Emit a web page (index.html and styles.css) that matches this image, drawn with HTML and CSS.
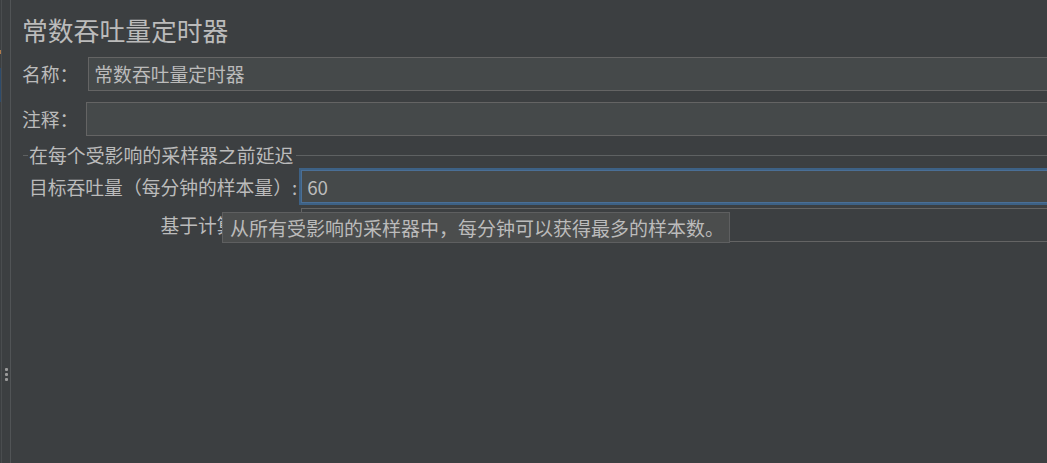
FILE: index.html
```html
<!DOCTYPE html>
<html lang="zh-CN">
<head>
<meta charset="utf-8">
<title>常数吞吐量定时器</title>
<link rel="stylesheet" href="styles.css">
</head>
<body>
<div class="app">
  <div class="gutter">
    <div class="gutter-line"></div>
    <div class="gutter-marks">
      <span class="mark-orange"></span>
      <span class="mark-blue"></span>
      <span class="grip"><i></i><i></i><i></i></span>
    </div>
  </div>
  <div class="divider"></div>
  <main class="panel">
    <h1 class="title">常数吞吐量定时器</h1>
    <div class="row row-name">
      <span class="label">名称：</span>
      <div class="field">常数吞吐量定时器</div>
    </div>
    <div class="row row-comment">
      <span class="label">注释：</span>
      <div class="field"></div>
    </div>
    <section class="group">
      <div class="group-head">
        <span class="group-line-short"></span>
        <span class="legend">在每个受影响的采样器之前延迟</span>
        <span class="group-line"></span>
      </div>
      <div class="grid">
        <span class="label glabel">目标吞吐量（每分钟的样本量）:</span>
        <div class="field focused">60</div>
        <span class="label glabel">基于计算吞吐量:</span>
        <div class="combo"></div>
      </div>
    </section>
  </main>
  <div class="tooltip">从所有受影响的采样器中，每分钟可以获得最多的样本数。</div>
</div>
</body>
</html>
```
FILE: styles.css
```css
html, body {
  margin: 0;
  padding: 0;
  background: #3c3f41;
  overflow: hidden;
}
body {
  width: 1047px;
  height: 463px;
  font-family: "Noto Sans CJK SC", "Noto Sans", sans-serif;
  color: #bbbbbb;
}
.app {
  position: relative;
  display: flex;
  height: 463px;
  overflow: hidden;
}
.gutter {
  position: relative;
  width: 10px;
  flex: none;
  display: flex;
}
.gutter-line {
  width: 1px;
  margin-left: 1px;
  background: #4a4d4f;
}
.gutter-marks {
  flex: 1;
  display: flex;
  flex-direction: column;
}
.mark-orange {
  position: absolute;
  left: 0;
  top: 50px;
  width: 1px;
  height: 4px;
  background: #b07a4a;
}
.mark-blue {
  position: absolute;
  left: 0;
  top: 68px;
  width: 1px;
  height: 34px;
  background: #2d4b6b;
}
.grip {
  position: absolute;
  left: 5px;
  top: 368px;
  display: flex;
  flex-direction: column;
  gap: 2px;
}
.grip i {
  display: block;
  width: 3px;
  height: 3px;
  background: #9a9a9a;
  border-radius: 1px;
}
.divider {
  width: 1px;
  flex: none;
  background: #515456;
}
.panel {
  flex: 1;
  padding-left: 11px;
  min-width: 0;
}
.title {
  margin: 11px 0 0 0;
  font-size: 25.8px;
  font-weight: normal;
  line-height: 38px;
  color: #bbbbbb;
  white-space: nowrap;
}
.row {
  display: flex;
  align-items: center;
  white-space: nowrap;
}
.label {
  font-size: 18.8px;
  line-height: 26px;
  white-space: nowrap;
}
.field {
  box-sizing: border-box;
  height: 34px;
  flex: none;
  width: 1100px;
  background: #45494a;
  border: 1px solid #646464;
  font-size: 18.8px;
  line-height: 32px;
  padding-left: 5px;
  color: #bbbbbb;
}
.row-name {
  margin-top: 8px;
}
.row-name .field {
  margin-left: 10px;
}
.row-comment {
  margin-top: 11px;
}
.row-comment .field {
  margin-left: 8px;
}
.group {
  margin-top: 9px;
  margin-left: 1px;
}
.group-head {
  display: flex;
  align-items: center;
  height: 20px;
}
.group-line-short {
  width: 5px;
  height: 1px;
  background: #5e6162;
  flex: none;
}
.legend {
  font-size: 18.9px;
  line-height: 20px;
  padding: 0 1px;
  white-space: nowrap;
}
.group-line {
  flex: 1;
  height: 1px;
  background: #5e6162;
  margin-left: 2px;
}
.grid {
  display: grid;
  grid-template-columns: auto 1100px;
  column-gap: 4px;
  row-gap: 5px;
  align-items: center;
  margin-top: 5px;
  margin-left: 6px;
}
.glabel {
  justify-self: end;
}
.field.focused {
  width: 1100px;
  height: 33px;
  border: 1px solid #4a6f96;
  outline: 2px solid #3d6185;
  line-height: 31px;
  padding-left: 5px;
}
.combo {
  box-sizing: border-box;
  height: 34px;
  border: 1px solid #646464;
  background: #3c3f41;
}
.tooltip {
  position: absolute;
  left: 222px;
  top: 212px;
  box-sizing: border-box;
  height: 31px;
  padding: 0 5px 0 7px;
  background: #4b4d4d;
  border: 1px solid #5e5f60;
  font-size: 19px;
  line-height: 29px;
  color: #bbbbbb;
  white-space: nowrap;
}
```
